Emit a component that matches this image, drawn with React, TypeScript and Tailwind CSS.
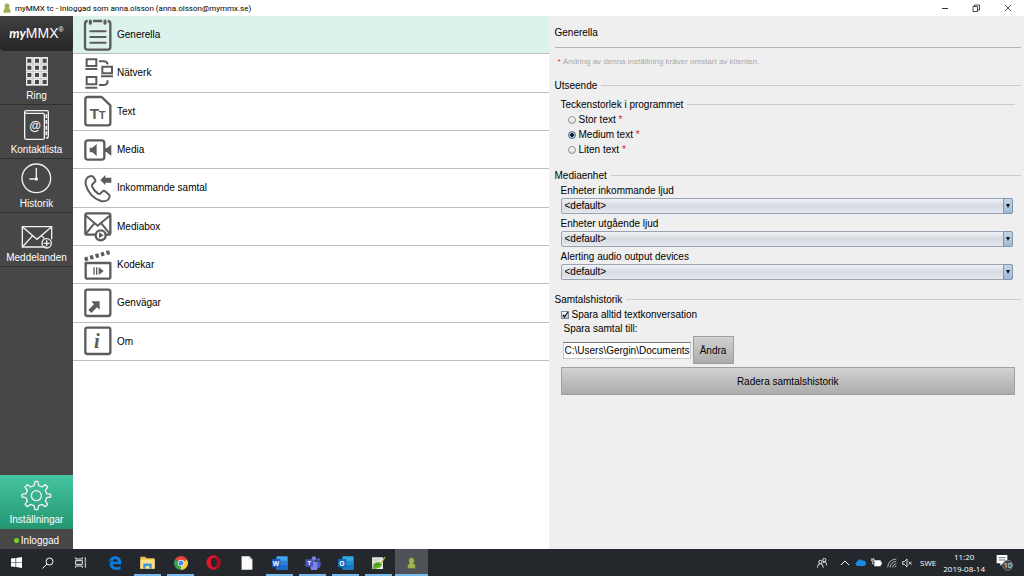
import { useState, type ReactNode } from "react";

interface IconProps {
  children: ReactNode;
}

// Shared frame for the settings list icons
function ListIcon({ children }: IconProps) {
  return (
    <svg viewBox="0 0 90 96" className="h-8 w-[30px] shrink-0" fill="none" stroke="#5c5c5c" strokeWidth="7" aria-hidden="true">
      {children}
    </svg>
  );
}

function NavIcon({ children }: IconProps) {
  return (
    <svg viewBox="0 0 96 96" className="size-8" fill="none" stroke="#f2f2f2" strokeWidth="4" aria-hidden="true">
      {children}
    </svg>
  );
}

const settings = [
  {
    id: "generella",
    label: "Generella",
    icon: (
      <>
        <rect x="6" y="6" width="76" height="86" rx="8" />
        <path d="M22 37h46M22 54h46M22 71h46" strokeLinecap="round" strokeWidth="6" />
        <path d="M22 1v9M66 1v9" stroke="#dcf2ec" strokeWidth="16" />
        <path d="M22 6v7M66 6v7" strokeWidth="9" strokeLinecap="round" />
      </>
    ),
  },
  {
    id: "natverk",
    label: "Nätverk",
    icon: (
      <g strokeWidth="6">
        <path d="M11 7h29v20H11zM58 29h29v20H58zM11 60h29v22H11z" />
        <path d="M7 36h36M54 58h36M7 92h36" />
        <path d="M48 13h14q11 0 12 9M48 84h16q10 0 10-14" />
      </g>
    ),
  },
  {
    id: "text",
    label: "Text",
    icon: (
      <>
        <path d="M56 6H14q-7 0-7 7v71q0 7 7 7h61q7 0 7-7V31z" strokeLinejoin="round" />
        <g fill="#5c5c5c" stroke="none" fontFamily="Liberation Sans, sans-serif" fontWeight="bold">
          <text x="20" y="73" fontSize="46">T</text>
          <text x="47" y="73" fontSize="34">T</text>
        </g>
      </>
    ),
  },
  {
    id: "media",
    label: "Media",
    icon: (
      <>
        <rect x="7" y="19" width="57" height="58" rx="8" />
        <path d="M20 41h8l13-11v36l-13-11h-8z" fill="#5c5c5c" stroke="none" />
        <path d="M66 43h4l15-11v33L70 54h-4z" fill="#5c5c5c" stroke="none" />
      </>
    ),
  },
  {
    id: "inkommande",
    label: "Inkommande samtal",
    icon: (
      <>
        <path
          d="M24 12C12 14 5 24 8 37c5 23 23 43 46 50 12 3 23-2 26-13q1-4-3-7L66 58q-4-3-8 1l-6 6q-4 2-8-1C35 57 30 51 27 43q-1-4 2-7l6-6q4-4 1-8l-6-8q-3-3-6-2z"
          strokeWidth="6"
          strokeLinejoin="round"
        />
        <path d="M52 24l15-15v8h18v15H67v8z" fill="#5c5c5c" stroke="none" />
      </>
    ),
  },
  {
    id: "mediabox",
    label: "Mediabox",
    icon: (
      <>
        <rect x="7" y="10" width="75" height="64" rx="6" />
        <path d="M9 17l35 30 36-30M9 71l25-31M80 71L55 40" strokeWidth="6" />
        <circle cx="53" cy="76" r="15" fill="#fff" />
        <path d="M48 67v18l14-9z" fill="#5c5c5c" stroke="none" />
      </>
    ),
  },
  {
    id: "kodekar",
    label: "Kodekar",
    icon: (
      <>
        <path d="M8 42h74v42q0 5-5 5H13q-5 0-5-5z" strokeLinejoin="round" />
        <path d="M5 31L84 8" strokeWidth="12" strokeDasharray="10 7" />
        <path d="M33 55v22M41 55v22" strokeWidth="4" />
        <path d="M47 54v24l15-12z" fill="#5c5c5c" stroke="none" />
      </>
    ),
  },
  {
    id: "genvagar",
    label: "Genvägar",
    icon: (
      <>
        <rect x="7" y="8" width="75" height="79" rx="6" />
        <path d="M50 43v25l-8-7-17 17-9-9 17-17-8-9z" fill="#5c5c5c" stroke="none" />
      </>
    ),
  },
  {
    id: "om",
    label: "Om",
    icon: (
      <>
        <rect x="7" y="8" width="75" height="79" rx="6" />
        <text x="33" y="70" fontSize="62" fontFamily="Liberation Serif, serif" fontWeight="bold" fontStyle="italic" fill="#5c5c5c" stroke="none">
          i
        </text>
      </>
    ),
  },
];

const navItems = [
  {
    label: "Ring",
    icon: (
      <>
        <rect x="15" y="6" width="66" height="86" fill="#ececec" stroke="none" />
        {[11, 32, 54, 75].map((y) => (
          <path key={y} d={`M19 ${y + 6}h12M42 ${y + 6}h12M65 ${y + 6}h12`} stroke="#474747" strokeWidth="12" />
        ))}
        <path d="M36 6v86M60 6v86M15 27h66M15 49h66M15 71h66" stroke="#8a8a8a" strokeWidth="1" />
      </>
    ),
  },
  {
    label: "Kontaktlista",
    icon: (
      <>
        <path d="M69 13H16q-5 0-5-4 0-4 5-4h62q4 0 4 5v71q0 7-6 7" />
        <path d="M11 9v77q0 5 5 5h50q4 0 4-5V17q0-4-4-4" />
        <path d="M76 16v70" strokeDasharray="12 5" strokeWidth="5" />
        <text x="42" y="63" fontSize="36" textAnchor="middle" fontFamily="Liberation Sans, sans-serif" fontWeight="bold" fill="#f2f2f2" stroke="none">
          @
        </text>
      </>
    ),
  },
  {
    label: "Historik",
    icon: (
      <>
        <circle cx="46" cy="46" r="43" />
        <path d="M46 15v33M47 48H25" />
        <circle cx="46" cy="48" r="3" fill="#f2f2f2" />
      </>
    ),
  },
  {
    label: "Meddelanden",
    icon: (
      <g transform="translate(0 9)">
        <path d="M74 81H4V20h88v38" />
        <path d="M4 20l44 38 44-38M4 81l31-34M62 47l8 9" />
        <circle cx="77" cy="70" r="14" />
        <path d="M77 61v18M68 70h18" />
      </g>
    ),
  },
];

function Person({ className }: { className: string }) {
  return (
    <svg viewBox="0 0 24 32" className={className} aria-hidden="true">
      <path
        d="M12 2c5 0 7 3 7 8 0 3-1 5-3 7 4 1 6 4 6 8v5H2v-5c0-4 2-7 6-8-2-2-3-4-3-7 0-5 2-8 7-8z"
        fill="#9db54c"
        stroke="#71872f"
      />
    </svg>
  );
}

function OfficeIcon({ letter, dark, light }: { letter: string; dark: string; light: string }) {
  return (
    <svg viewBox="0 0 48 42" className="h-[14px] w-4">
      <rect x="13" y="1" width="34" height="40" rx="3" fill={light} />
      <path d="M13 14h34v13H13z" fill={dark} opacity=".45" />
      <path d="M13 27h34v11q0 3-3 3H16q-3 0-3-3z" fill={dark} opacity=".8" />
      <rect x="0" y="9" width="25" height="25" rx="2" fill={dark} />
      <text x="12" y="29" fontSize="20" textAnchor="middle" fontWeight="bold" fontFamily="Open Sans, sans-serif" fill="#fff">
        {letter}
      </text>
    </svg>
  );
}

const taskbarApps = [
  {
    name: "Edge",
    open: false,
    icon: (
      <svg viewBox="0 0 40 42" className="h-[14px] w-[14px]">
        <path
          d="M1 19C3 7 11 1 21 1c11 0 18 8 18 19v5H13c1 6 6 9 12 9 4 0 8-1 12-3v8c-4 2-8 3-13 3C12 42 4 35 4 25c0-6 3-11 8-14-5 1-9 4-11 8zm12-2h15c0-5-3-8-7-8-4 0-7 3-8 8z"
          fill="#0b7bdb"
        />
      </svg>
    ),
  },
  {
    name: "Utforskaren",
    open: true,
    icon: (
      <svg viewBox="0 0 46 40" className="h-[13px] w-[15px]">
        <path d="M1 2h15l4 5h25v32H1z" fill="#f1c04a" />
        <path d="M1 11h44v28H1z" fill="#fce08a" />
        <path d="M10 39V23h26v16h-7v-8H17v8z" fill="#3e98d8" />
      </svg>
    ),
  },
  {
    name: "Chrome",
    open: true,
    icon: (
      <svg viewBox="0 0 44 44" className="size-[14px]">
        <path d="M22 22L3 11a22 22 0 0 1 38 0z" fill="#e4453a" />
        <path d="M22 22L41 11a22 22 0 0 1-19 33z" fill="#f9ce3c" />
        <path d="M22 22v22A22 22 0 0 1 3 11z" fill="#38a152" />
        <circle cx="22" cy="22" r="10" fill="#fff" />
        <circle cx="22" cy="22" r="8" fill="#4a86e8" />
      </svg>
    ),
  },
  {
    name: "Opera",
    open: false,
    icon: (
      <svg viewBox="0 0 44 44" className="size-[15px]">
        <circle cx="22" cy="22" r="21" fill="#e3142b" />
        <path d="M30 3a21 21 0 0 1 0 38z" fill="#a90c1d" />
        <ellipse cx="23" cy="22" rx="9" ry="15" fill="#24272b" />
      </svg>
    ),
  },
  {
    name: "Dokument",
    open: false,
    icon: (
      <svg viewBox="0 0 36 44" className="h-[14px] w-3">
        <path d="M1 1h24l10 10v32H1z" fill="#fafafa" />
        <path d="M25 1v10h10z" fill="#c9c9c9" />
      </svg>
    ),
  },
  { name: "Word", open: true, icon: <OfficeIcon letter="W" dark="#185abd" light="#41a5ee" /> },
  {
    name: "Teams",
    open: true,
    icon: (
      <svg viewBox="0 0 48 44" className="h-[14px] w-4">
        <circle cx="27" cy="8" r="7" fill="#7b83eb" />
        <circle cx="41" cy="11" r="5" fill="#5059c9" />
        <path d="M16 17h23v15a11 11 0 0 1-23 5z" fill="#7b83eb" />
        <path d="M37 18h11v12q-1 8-10 8z" fill="#5059c9" />
        <rect x="0" y="10" width="24" height="24" rx="2" fill="#4b53bc" />
        <text x="12" y="29" fontSize="19" textAnchor="middle" fontWeight="bold" fontFamily="Open Sans, sans-serif" fill="#fff">
          T
        </text>
      </svg>
    ),
  },
  { name: "Outlook", open: true, icon: <OfficeIcon letter="O" dark="#0f6cbd" light="#32a9e7" /> },
  {
    name: "Notepad++",
    open: true,
    icon: (
      <svg viewBox="0 0 46 44" className="h-[14px] w-[15px]">
        <path d="M3 4h34v37H3z" fill="#f0f0ea" />
        <path d="M7 10h24M7 15h20" stroke="#b1b1b1" strokeWidth="2" />
        <path d="M5 34c0-12 9-17 19-15 8 1 11 7 9 12-3 8-18 11-28 9z" fill="#63b531" />
        <path d="M11 31q8-7 16-3" stroke="#2a701e" strokeWidth="3" fill="none" />
        <path d="M43 3L30 26" stroke="#c5b643" strokeWidth="4" />
      </svg>
    ),
  },
];

const devices = [
  { id: "in", label: "Enheter inkommande ljud" },
  { id: "out", label: "Enheter utgående ljud" },
  { id: "alert", label: "Alerting audio output devices" },
];

const textSizes = ["Stor text", "Medium text", "Liten text"];

function GroupTitle({ title }: { title: string }) {
  return (
    <h3 className="flex items-center gap-1 leading-[15px]">
      {title}
      <span className="h-px flex-1 bg-[#cbcbcb]" />
    </h3>
  );
}

function TitleBar() {
  return (
    <header className="flex h-4 items-center bg-white pl-[3px] font-[Roboto,sans-serif] text-[8px] text-black">
      <Person className="h-2.5 w-2" />
      <h1 className="ml-1 flex-1 leading-[15px]">myMMX tc - Inloggad som anna.olsson (anna.olsson@mymmx.se)</h1>
      <div className="flex">
        <button type="button" aria-label="Minimera" className="flex w-[31px] justify-center">
          <svg viewBox="0 0 8 8" className="size-2" fill="none" stroke="#333"><path d="M1 4.5h6" /></svg>
        </button>
        <button type="button" aria-label="Återställ" className="flex w-[31px] justify-center">
          <svg viewBox="0 0 8 8" className="size-2" fill="none" stroke="#333" strokeWidth=".9"><path d="M1 2.5h4.500v5H1zM2.500 2.500V1h5v5H5.500" /></svg>
        </button>
        <button type="button" aria-label="Stäng" className="flex w-[33px] justify-center">
          <svg viewBox="0 0 8 8" className="size-2" fill="none" stroke="#333" strokeWidth=".9"><path d="M1 1l6 6M7 1L1 7" /></svg>
        </button>
      </div>
    </header>
  );
}

function Sidebar() {
  return (
    <nav className="flex w-[73px] shrink-0 flex-col bg-[#474747] text-white">
      <div className="flex h-[35px] items-center justify-center rounded-sm bg-linear-to-b from-[#414141] to-[#262626] text-[14px]">
        <span className="font-[Lato,sans-serif] text-[13px] font-bold italic">my</span>MMX
        <sup className="text-[7px]">®</sup>
      </div>
      {navItems.map((item) => (
        <button
          key={item.label}
          type="button"
          className="flex h-[54px] flex-col items-center border-b border-[#303030] pt-1"
        >
          <NavIcon>{item.icon}</NavIcon>
          <span className="mt-0.5 leading-[14px]">{item.label}</span>
        </button>
      ))}
      <button type="button" className="mt-auto flex h-[54px] flex-col items-center bg-linear-to-b from-[#45c5a0] to-[#249672] pt-1">
        <NavIcon>
          <path
            d="M42 7h8l3 13 10 4 10-7 7 7-7 10 4 10 12 2v8l-12 2-4 10 7 10-7 7-10-7-10 4-3 12h-8l-3-12-10-4-10 7-7-7 7-10-4-10-12-2v-8l12-2 4-10-7-10 7-7 10 7 10-4z"
            strokeLinejoin="round"
          />
          <circle cx="46" cy="50" r="15" />
        </NavIcon>
        <span className="mt-0.5 leading-[14px]">Inställningar</span>
      </button>
      <div className="flex h-5 items-center justify-center gap-0.5 pt-0.5">
        <span className="size-[5px] rounded-full bg-[#7ed321]" />
        Inloggad
      </div>
    </nav>
  );
}

function SettingsList() {
  const [active, setActive] = useState("generella");
  return (
    <div className="bg-white">
      <ul className="grid h-[345px] grid-rows-9">
        {settings.map((item) => (
          <li key={item.id} className="border-b border-[#bdbdbd]">
            <button
              type="button"
              onClick={() => setActive(item.id)}
              className={`flex h-full w-full items-center gap-1 pl-2.5 text-left ${active === item.id ? "bg-[#dcf2ec]" : ""}`}
            >
              <ListIcon>{item.icon}</ListIcon>
              {item.label}
            </button>
          </li>
        ))}
      </ul>
    </div>
  );
}

function GeneralPanel() {
  return (
    <main className="bg-[#efefef] pr-[3px] pl-1.5">
      <h2 className="flex h-8 items-center border-b border-[#b4b4b4] pt-0.5">Generella</h2>
      <p className="mt-1.5 pl-[3px] text-[8px] leading-[15px] text-[#a8a8a8]">
        <span className="text-[#e02020]">*</span> Ändring av denna inställning kräver omstart av klienten.
      </p>

      <section className="mt-[9px]">
        <GroupTitle title="Utseende" />
        <div className="mt-1 pr-1.5 pl-1.5">
          <GroupTitle title="Teckenstorlek i programmet" />
          {textSizes.map((size) => (
            <label key={size} className="flex h-[15px] items-center gap-[3px] pl-[7px]">
              <input
                type="radio"
                name="size"
                defaultChecked={size === "Medium text"}
                className="size-2 appearance-none rounded-full border border-[#8b9099] bg-linear-to-b from-white to-[#d5d8dd] checked:border-[#55708f] checked:bg-[radial-gradient(circle,#16202c_40%,#b3c6da_50%)]"
              />
              <span>
                {size} <span className="text-[#e02020]">*</span>
              </span>
            </label>
          ))}
        </div>
      </section>

      <section className="mt-[11px]">
        <GroupTitle title="Mediaenhet" />
        <div className="flex flex-col gap-0.5 pr-2 pl-1.5">
          {devices.map((device) => (
            <div key={device.id}>
              <label htmlFor={device.id} className="block leading-[15px]">
                {device.label}
              </label>
              <div className="relative h-4">
                <select
                  id={device.id}
                  className="block h-4 w-full appearance-none rounded-[2px] border border-[#9aa3b0] bg-linear-to-b from-[#f0f2f5] via-[#d6dae1] to-[#e6e9ef] pl-[3px] leading-[14px]"
                >
                  <option>&lt;default&gt;</option>
                </select>
                <span className="pointer-events-none absolute inset-y-0 right-0 flex w-2.5 items-center justify-center rounded-r-[2px] border border-[#7f97b3] bg-linear-to-b from-[#c3d5e8] to-[#a2bbd5]">
                  <svg viewBox="0 0 4 4" className="size-1"><path d="M0 0h4L2 4z" fill="#111" /></svg>
                </span>
              </div>
            </div>
          ))}
        </div>
      </section>

      <section className="mt-3">
        <GroupTitle title="Samtalshistorik" />
        <div className="pr-1.5 pl-1.5">
          <label className="flex h-[15px] items-center gap-[3px]">
            <span className="relative flex">
              <input
                type="checkbox"
                defaultChecked
                className="size-2 appearance-none border border-[#7c8794] bg-linear-to-b from-white to-[#a9bfd6]"
              />
              <svg viewBox="0 0 8 8" className="pointer-events-none absolute inset-0 size-2" fill="none" stroke="#111" strokeWidth="1.3">
                <path d="M2 4l1.500 2L7 1" />
              </svg>
            </span>
            Spara alltid textkonversation
          </label>
          <label htmlFor="path" className="block pl-[3px] leading-[14px]">
            Spara samtal till:
          </label>
          <div className="flex items-center gap-0.5 pl-0.5">
            <input
              id="path"
              type="text"
              defaultValue="C:\Users\Gergin\Documents"
              className="h-[17px] w-[128px] border border-[#c9c9c9] border-t-[#777] bg-white pl-px"
            />
            <button type="button" className="h-7 w-[41px] border border-[#9f9f9f] bg-linear-to-b from-[#d2d2d2] to-[#acacac]">
              Ändra
            </button>
          </div>
          <button type="button" className="mt-[3px] h-7 w-full border border-[#9f9f9f] bg-linear-to-b from-[#d2d2d2] to-[#acacac]">
            Radera samtalshistorik
          </button>
        </div>
      </section>
    </main>
  );
}

function Taskbar() {
  return (
    <footer className="flex h-[27px] items-stretch bg-[#24282d] font-['Open_Sans',sans-serif] text-[8px] text-white">
      <button type="button" aria-label="Start" className="flex w-8 items-center justify-center">
        <svg viewBox="0 0 34 34" className="size-[11px]" fill="#fff"><path d="M0 5l14-2v13H0zM16 3l18-3v16H16zM0 18h14v13L0 29zM16 18h18v16l-18-3z" /></svg>
      </button>
      <button type="button" aria-label="Sök" className="flex w-8 items-center justify-center">
        <svg viewBox="0 0 12 12" className="size-3" fill="none" stroke="#fff"><circle cx="7.500" cy="4.500" r="3.500" /><path d="M5 7l-4.500 4.500" /></svg>
      </button>
      <button type="button" aria-label="Aktivitetsvy" className="flex w-[34px] items-center justify-center">
        <svg viewBox="0 0 36 33" className="h-[11px] w-3" fill="none" stroke="#eee" strokeWidth="3"><path d="M2 1v5h20V1M2 32v-5h20v5M2 11h20v11H2zM31 1v8M31 16v16M28 12h6" /></svg>
      </button>
      {taskbarApps.map((app) => (
        <button
          key={app.name}
          type="button"
          aria-label={app.name}
          className="flex w-[33px] flex-col items-center justify-between px-[3px]"
        >
          <span className="flex flex-1 items-center pt-0.5">{app.icon}</span>
          <span className={`h-0.5 w-full ${app.open ? "bg-[#76b9ed]" : ""}`} />
        </button>
      ))}
      <button type="button" aria-label="myMMX" className="flex w-[33px] flex-col items-center bg-[#4f5256]">
        <span className="flex flex-1 items-center pt-0.5">
          <Person className="h-3 w-[9px]" />
        </span>
        <span className="h-0.5 w-full bg-[#76b9ed]" />
      </button>
      <div className="ml-auto flex items-center gap-[5px] pr-2.5">
        <svg viewBox="0 0 30 30" className="mr-2 size-2.5" fill="none" stroke="#fff" strokeWidth="2.500"><circle cx="10" cy="12" r="5" /><circle cx="22" cy="6" r="5" /><path d="M1 29q1-12 9-12t9 12M17 15q4-5 8-3 4 3 4 10" /></svg>
        <svg viewBox="0 0 10 10" className="size-2.5" fill="none" stroke="#fff"><path d="M1 7l4-4 4 4" /></svg>
        <svg viewBox="0 0 33 21" className="h-[7px] w-[11px]"><path d="M7 21a7 7 0 0 1-1-13A9 9 0 0 1 22 5a8 8 0 0 1 5 16z" fill="#168ce4" /></svg>
        <svg viewBox="0 0 33 27" className="h-[9px] w-[11px]" fill="#fff"><path d="M10 7h19v4h3v9h-3v5H10z" /><path d="M3 0v5M8 0v5M1 5h9v4H1zM5 9v9h5" stroke="#fff" strokeWidth="2" fill="none" /></svg>
        <svg viewBox="0 0 30 30" className="size-2.5" fill="none" stroke="#c8c8c8" strokeWidth="2.500"><path d="M2 28Q4 5 28 3M9 28Q11 12 28 10M16 28Q18 19 28 17M22 28q2-4 6-4" /></svg>
        <svg viewBox="0 0 33 30" className="h-2.5 w-[11px]" fill="none" stroke="#fff" strokeWidth="2.500"><path d="M2 11h5l8-8v24l-8-8H2zM20 11l9 9M29 11l-9 9" /></svg>
        <span className="ml-0.5">SWE</span>
        <time className="ml-0.5 text-center leading-[12px]">
          11:20
          <br />
          2019-08-14
        </time>
        <button type="button" aria-label="Meddelandecenter" className="ml-1.5 flex">
          <svg viewBox="0 0 54 51" className="h-[17px] w-[18px]">
            <path d="M2 3h32v25H20l-7 8v-8H2z" fill="#fff" />
            <path d="M8 11h20M8 18h20" stroke="#24282d" strokeWidth="2" />
            <circle cx="35" cy="34" r="15" fill="#3f4347" stroke="#9a9a9a" strokeWidth="2" />
            <text x="35" y="42" fontSize="21" textAnchor="middle" fontFamily="Open Sans, sans-serif" fill="#fff">10</text>
          </svg>
        </button>
      </div>
    </footer>
  );
}

export default function App() {
  return (
    <div className="flex min-h-screen flex-col font-['Liberation_Sans',Arial,sans-serif] text-[10px] text-black">
      <TitleBar />
      <div className="flex flex-1">
        <Sidebar />
        <div className="grid flex-1 grid-cols-2">
          <SettingsList />
          <GeneralPanel />
        </div>
      </div>
      <Taskbar />
    </div>
  );
}
